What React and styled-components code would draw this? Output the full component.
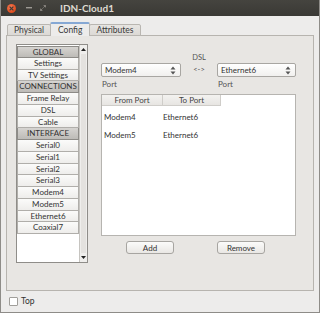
import React from 'react';
import styled, {createGlobalStyle} from 'styled-components';

const Global = createGlobalStyle`
	html, body { margin: 0; padding: 0; background: #edeceb; }
	body { font-family: Lato, "DejaVu Sans", sans-serif; }
`

const menu = [
	{label: 'GLOBAL', header: true},
	{label: 'Settings'},
	{label: 'TV Settings'},
	{label: 'CONNECTIONS', header: true},
	{label: 'Frame Relay'},
	{label: 'DSL'},
	{label: 'Cable'},
	{label: 'INTERFACE', header: true},
	{label: 'Serial0'},
	{label: 'Serial1'},
	{label: 'Serial2'},
	{label: 'Serial3'},
	{label: 'Modem4'},
	{label: 'Modem5'},
	{label: 'Ethernet6'},
	{label: 'Coaxial7'},
]

const links = [
	{from: 'Modem4', to: 'Ethernet6'},
	{from: 'Modem5', to: 'Ethernet6'},
]

const SpinIcon = () => (
	<svg width="6" height="9" viewBox="0 0 6 9">
		<path d="M3 0.5 L5.5 3.5 H0.5 Z" fill="#555" />
		<path d="M3 8.5 L5.5 5.5 H0.5 Z" fill="#555" />
	</svg>
)

const App = () => {
	return (
		<>
			<Global />
			<Window>
				<TitleBar>
					<CloseBtn>
						<svg width="5" height="5" viewBox="0 0 5 5">
							<path d="M0.6 0.6 L4.4 4.4 M4.4 0.6 L0.6 4.4" stroke="#3c3b37" strokeWidth="1.2" />
						</svg>
					</CloseBtn>
					<WinBtn>
						<svg width="6" height="2" viewBox="0 0 6 2"><rect x="0" y="0" width="6" height="1.4" fill="#9d9a94" /></svg>
					</WinBtn>
					<WinBtn>
						<svg width="6" height="6" viewBox="0 0 6 6">
							<path d="M3.6 0.5 H5.5 V2.4 M5.5 0.5 L3.4 2.6 M2.4 5.5 H0.5 V3.6 M0.5 5.5 L2.6 3.4" stroke="#8a8781" strokeWidth="0.9" fill="none" />
						</svg>
					</WinBtn>
					<Title>IDN-Cloud1</Title>
				</TitleBar>

				<Body>
					<TabRow>
						<Tab>Physical</Tab>
						<Tab active>Config</Tab>
						<Tab>Attributes</Tab>
					</TabRow>

					<TabPanel>
						<ListFrame>
							<List>
								{menu.map(item => (
									<ListItem key={item.label} header={item.header}>{item.label}</ListItem>
								))}
							</List>
							<ScrollBar>
								<ScrollArrow>
									<svg width="5" height="3" viewBox="0 0 5 3"><path d="M2.5 0 L5 3 H0 Z" fill="#222" /></svg>
								</ScrollArrow>
								<ScrollTrack />
								<ScrollArrow>
									<svg width="5" height="3" viewBox="0 0 5 3"><path d="M2.5 3 L5 0 H0 Z" fill="#222" /></svg>
								</ScrollArrow>
							</ScrollBar>
						</ListFrame>

						<RightPane>
							<PortGrid>
								<Middle row={1}>DSL</Middle>
								<Select col={1}>Modem4<SpinIcon /></Select>
								<Middle row={2}>&lt;-&gt;</Middle>
								<Select col={3}>Ethernet6<SpinIcon /></Select>
								<PortLabel col={1}>Port</PortLabel>
								<PortLabel col={3}>Port</PortLabel>
							</PortGrid>

							<Table>
								<HeadRow>
									<HeadCell w={61}>From Port</HeadCell>
									<HeadCell w={58}>To Port</HeadCell>
								</HeadRow>
								<TableBody>
									{links.map(l => (
										<Row key={l.from}>
											<Cell w={59}>{l.from}</Cell>
											<Cell>{l.to}</Cell>
										</Row>
									))}
								</TableBody>
							</Table>

							<ButtonRow>
								<PushButton>Add</PushButton>
								<PushButton>Remove</PushButton>
							</ButtonRow>
						</RightPane>
					</TabPanel>

					<Footer>
						<CheckBox />
						<span>Top</span>
					</Footer>
				</Body>
			</Window>
		</>
	);
};

const Window = styled.div`
	width: 320px;
	height: 313px;
	box-sizing: border-box;
	border: 1px solid #8e8c88;
	border-top: none;
	background: #edeceb;
	display: flex;
	flex-direction: column;
	overflow: hidden;
`

const TitleBar = styled.div`
	height: 16px;
	flex-shrink: 0;
	background: linear-gradient(#45443f, #3a3935);
	display: flex;
	align-items: center;
	padding-left: 6px;
`

const CloseBtn = styled.div`
	width: 9px;
	height: 9px;
	border-radius: 50%;
	background: radial-gradient(circle at 40% 35%, #f47b56, #df4b1c 70%);
	display: flex;
	align-items: center;
	justify-content: center;
	margin-right: 8px;
`

const WinBtn = styled.div`
	width: 9px;
	height: 9px;
	display: flex;
	align-items: center;
	justify-content: center;
	margin-right: 5px;
`

const Title = styled.div`
	margin-left: 8px;
	color: #dfdbd2;
	font-size: 10px;
	font-weight: bold;
`

const Body = styled.div`
	flex: 1;
	display: flex;
	flex-direction: column;
	padding: 6px 5px 0 5px;
`

const TabRow = styled.div`
	display: flex;
	align-items: flex-end;
	height: 14px;
	padding-left: 2px;
	position: relative;
	z-index: 1;
	margin-bottom: -1px;
`

const Tab = styled.div`
	height: ${p => p.active ? 14 : 12}px;
	box-sizing: border-box;
	padding: 0 ${p => p.active ? 7 : 6}px;
	font-size: 8.5px;
	color: #3a3a3a;
	display: flex;
	align-items: center;
	border: 1px solid #b9b6b1;
	border-bottom: ${p => p.active ? 'none' : '1px solid #b9b6b1'};
	border-top: ${p => p.active ? '2px solid #86a8d4' : '1px solid #b9b6b1'};
	border-radius: 2px 2px 0 0;
	background: ${p => p.active ? '#edeceb' : 'linear-gradient(#e7e5e2, #dcd9d5)'};
	margin-left: -1px;
`

const TabPanel = styled.div`
	height: 256px;
	box-sizing: border-box;
	border: 1px solid #b7b4af;
	background: #e8e6e3;
	display: flex;
	align-items: flex-start;
	padding: 8px 0 0 9px;
`

const ListFrame = styled.div`
	width: 72px;
	height: 219px;
	box-sizing: border-box;
	border: 1px solid #8f8d89;
	background: #fff;
	display: flex;
`

const List = styled.div`
	width: 62px;
	display: flex;
	flex-direction: column;
	padding-top: 1px;
`

const ListItem = styled.div`
	height: 11.75px;
	box-sizing: border-box;
	border: 1px solid ${p => p.header ? '#8d8b87' : '#b0aeaa'};
	border-top: none;
	background: ${p => p.header ? 'linear-gradient(#d6d4d1, #bdbbb7)' : 'linear-gradient(#fbfbfa, #eeedeb)'};
	color: #333;
	font-size: 8px;
	line-height: 10.5px;
	text-align: center;
	white-space: nowrap;
	overflow: hidden;
	&:first-child { border-top: 1px solid #8d8b87; }
`

const ScrollBar = styled.div`
	flex: 1;
	display: flex;
	flex-direction: column;
	border-left: 1px solid #c6c4c0;
	background: #efeeec;
`

const ScrollArrow = styled.div`
	height: 9px;
	display: flex;
	align-items: center;
	justify-content: center;
`

const ScrollTrack = styled.div`
	flex: 1;
	margin: 0 1px;
	background: #e4e2df;
`

const RightPane = styled.div`
	margin-left: 13px;
	width: 195px;
	display: flex;
	flex-direction: column;
`

const PortGrid = styled.div`
	display: grid;
	grid-template-columns: 80px 1fr 79px;
	grid-template-rows: 11px 14px 14px;
	margin-top: 8px;
	font-size: 8px;
	color: #444;
`

const Middle = styled.div`
	grid-column: 2;
	grid-row: ${p => p.row};
	text-align: center;
	align-self: center;
	font-size: 7.5px;
	color: #555;
	line-height: 10px;
`

const Select = styled.div`
	grid-column: ${p => p.col};
	grid-row: 2;
	box-sizing: border-box;
	height: 14px;
	border: 1px solid #a8a6a2;
	border-radius: 2px;
	background: linear-gradient(#ffffff, #f1f0ee);
	display: flex;
	align-items: center;
	justify-content: space-between;
	padding: 0 4px 0 3px;
	color: #333;
`

const PortLabel = styled.div`
	grid-column: ${p => p.col};
	grid-row: 3;
	align-self: center;
	padding-left: 1px;
	color: #555;
`

const Table = styled.div`
	margin-top: 3px;
	height: 142px;
	box-sizing: border-box;
	border: 1px solid #b6b4b0;
	background: #fff;
	display: flex;
	flex-direction: column;
`

const HeadRow = styled.div`
	display: flex;
	height: 11px;
	background: #fff;
`

const HeadCell = styled.div`
	width: ${p => p.w}px;
	box-sizing: border-box;
	border-right: 1px solid #cfcdc9;
	border-bottom: 1px solid #cfcdc9;
	background: linear-gradient(#f3f2f0, #e7e5e2);
	font-size: 8px;
	color: #444;
	text-align: center;
	line-height: 10px;
`

const TableBody = styled.div`
	display: flex;
	flex-direction: column;
	padding-top: 2px;
`

const Row = styled.div`
	display: flex;
	height: 18px;
	align-items: center;
	font-size: 8px;
	color: #333;
	padding-left: 2px;
`

const Cell = styled.div`
	width: ${p => p.w ? p.w + 'px' : 'auto'};
`

const ButtonRow = styled.div`
	display: flex;
	gap: 43px;
	padding-left: 25px;
	margin-top: 5px;
`

const PushButton = styled.div`
	width: 48px;
	height: 13px;
	box-sizing: border-box;
	border: 1px solid #a7a5a1;
	border-radius: 3px;
	background: linear-gradient(#fbfbfa, #e9e7e4);
	font-size: 8px;
	color: #333;
	display: flex;
	align-items: center;
	justify-content: center;
`

const Footer = styled.div`
	display: flex;
	align-items: center;
	gap: 3px;
	margin-top: 5px;
	padding-left: 3px;
	font-size: 8.5px;
	color: #333;
`

const CheckBox = styled.div`
	width: 9px;
	height: 9px;
	box-sizing: border-box;
	border: 1px solid #a09e9a;
	border-radius: 1px;
	background: #fff;
`

export default App;
